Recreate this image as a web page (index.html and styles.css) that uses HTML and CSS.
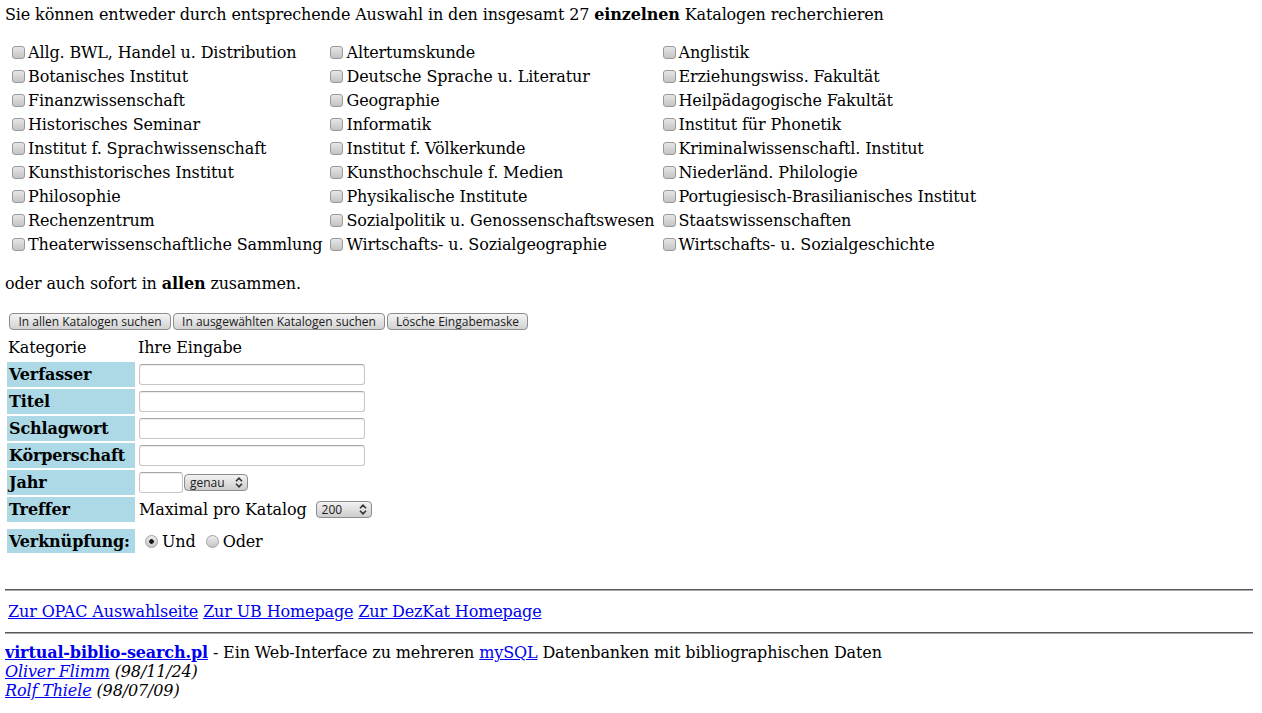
FILE: index.html
```html
<!DOCTYPE html>
<html lang="de">
<head>
<meta charset="utf-8">
<title>Virtueller Katalog</title>
<link rel="stylesheet" href="styles.css">
</head>
<body>
<p class="intro">Sie können entweder durch entsprechende Auswahl in den insgesamt 27 <b>einzelnen</b> Katalogen recherchieren</p>

<div class="catalogs">
  <label class="cat"><input type="checkbox" class="cb">Allg. BWL, Handel u. Distribution</label>
  <label class="cat"><input type="checkbox" class="cb">Altertumskunde</label>
  <label class="cat"><input type="checkbox" class="cb">Anglistik</label>
  <label class="cat"><input type="checkbox" class="cb">Botanisches Institut</label>
  <label class="cat"><input type="checkbox" class="cb">Deutsche Sprache u. Literatur</label>
  <label class="cat"><input type="checkbox" class="cb">Erziehungswiss. Fakultät</label>
  <label class="cat"><input type="checkbox" class="cb">Finanzwissenschaft</label>
  <label class="cat"><input type="checkbox" class="cb">Geographie</label>
  <label class="cat"><input type="checkbox" class="cb">Heilpädagogische Fakultät</label>
  <label class="cat"><input type="checkbox" class="cb">Historisches Seminar</label>
  <label class="cat"><input type="checkbox" class="cb">Informatik</label>
  <label class="cat"><input type="checkbox" class="cb">Institut für Phonetik</label>
  <label class="cat"><input type="checkbox" class="cb">Institut f. Sprachwissenschaft</label>
  <label class="cat"><input type="checkbox" class="cb">Institut f. Völkerkunde</label>
  <label class="cat"><input type="checkbox" class="cb">Kriminalwissenschaftl. Institut</label>
  <label class="cat"><input type="checkbox" class="cb">Kunsthistorisches Institut</label>
  <label class="cat"><input type="checkbox" class="cb">Kunsthochschule f. Medien</label>
  <label class="cat"><input type="checkbox" class="cb">Niederländ. Philologie</label>
  <label class="cat"><input type="checkbox" class="cb">Philosophie</label>
  <label class="cat"><input type="checkbox" class="cb">Physikalische Institute</label>
  <label class="cat"><input type="checkbox" class="cb">Portugiesisch-Brasilianisches Institut</label>
  <label class="cat"><input type="checkbox" class="cb">Rechenzentrum</label>
  <label class="cat"><input type="checkbox" class="cb">Sozialpolitik u. Genossenschaftswesen</label>
  <label class="cat"><input type="checkbox" class="cb">Staatswissenschaften</label>
  <label class="cat"><input type="checkbox" class="cb">Theaterwissenschaftliche Sammlung</label>
  <label class="cat"><input type="checkbox" class="cb">Wirtschafts- u. Sozialgeographie</label>
  <label class="cat"><input type="checkbox" class="cb">Wirtschafts- u. Sozialgeschichte</label>
</div>

<p class="all">oder auch sofort in <b>allen</b> zusammen.</p>

<form class="search">
  <div class="buttons">
    <button type="button" class="btn b1">In allen Katalogen suchen</button>
    <button type="button" class="btn b2">In ausgewählten Katalogen suchen</button>
    <button type="button" class="btn b3">Lösche Eingabemaske</button>
  </div>
  <table class="mask">
    <tr class="head">
      <td class="hcell">Kategorie</td>
      <td class="hcell">Ihre Eingabe</td>
    </tr>
    <tr class="row">
      <td class="label">Verfasser</td>
      <td class="field"><input type="text" class="txt"></td>
    </tr>
    <tr class="row">
      <td class="label">Titel</td>
      <td class="field"><input type="text" class="txt"></td>
    </tr>
    <tr class="row">
      <td class="label">Schlagwort</td>
      <td class="field"><input type="text" class="txt"></td>
    </tr>
    <tr class="row">
      <td class="label">Körperschaft</td>
      <td class="field"><input type="text" class="txt"></td>
    </tr>
    <tr class="row">
      <td class="label">Jahr</td>
      <td class="field">
        <div class="inline">
          <input type="text" class="txt year">
          <span class="sel sel-genau">
            <select class="dropdown"><option>genau</option><option>ab</option><option>bis</option></select>
            <svg class="chev" width="8" height="11" viewBox="0 0 8 11"><path d="M1 4.2 L4 1.2 L7 4.2 M1 6.8 L4 9.8 L7 6.8" fill="none" stroke="#333" stroke-width="1.6"/></svg>
          </span>
        </div>
      </td>
    </tr>
    <tr class="row">
      <td class="label">Treffer</td>
      <td class="field">
        <div class="inline">
          <span class="maxtext">Maximal pro Katalog</span>
          <span class="sel sel-200">
            <select class="dropdown"><option>200</option><option>50</option><option>100</option><option>500</option></select>
            <svg class="chev" width="8" height="11" viewBox="0 0 8 11"><path d="M1 4.2 L4 1.2 L7 4.2 M1 6.8 L4 9.8 L7 6.8" fill="none" stroke="#333" stroke-width="1.6"/></svg>
          </span>
        </div>
      </td>
    </tr>
    <tr class="spacer"><td></td><td></td></tr>
    <tr class="row link-row">
      <td class="label">Verknüpfung:</td>
      <td class="field">
        <div class="inline">
          <label class="opt opt-und"><input type="radio" name="bool" class="rb" checked>Und</label>
          <label class="opt opt-oder"><input type="radio" name="bool" class="rb">Oder</label>
        </div>
      </td>
    </tr>
  </table>
</form>

<hr class="rule rule-top">
<div class="nav">
  <a href="#">Zur OPAC Auswahlseite</a> <a href="#">Zur UB Homepage</a> <a href="#">Zur DezKat Homepage</a>
</div>
<hr class="rule rule-bottom">
<div class="footer">
  <div><a href="#" class="strong">virtual-biblio-search.pl</a> - Ein Web-Interface zu mehreren <a href="#">mySQL</a> Datenbanken mit bibliographischen Daten</div>
  <div class="sig"><a href="#">Oliver Flimm</a> (98/11/24)</div>
  <div class="sig"><a href="#">Rolf Thiele</a> (98/07/09)</div>
</div>
</body>
</html>
```

FILE: styles.css
```css
html, body {
  background: #ffffff;
}

body {
  margin: 5px 9px 5px 5px;
  font-family: "DejaVu Serif", serif;
  font-size: 16px;
  letter-spacing: -0.13px;
  color: #000000;
}

a {
  color: #0000ee;
  text-decoration: underline;
}

.intro {
  margin: 0;
  line-height: 19px;
}

/* catalog checkbox grid */
.catalogs {
  display: grid;
  grid-template-columns: repeat(3, max-content);
  grid-auto-rows: 24px;
  column-gap: 4px;
  margin: 16px 0 0 0;
  padding-left: 3px;
}

.cat {
  display: flex;
  align-items: center;
  white-space: nowrap;
  line-height: 19px;
}

.cb {
  -webkit-appearance: none;
  appearance: none;
  box-sizing: border-box;
  width: 13px;
  height: 13px;
  margin: 1px 3px 0 4px;
  border: 1px solid #9a9a9a;
  border-radius: 3px;
  background: linear-gradient(#e6e6e6, #c4c4c4);
  flex: none;
}

.all {
  margin: 18px 0 0 0;
  line-height: 19px;
}

/* buttons */
.search {
  margin: 0;
}

.buttons {
  display: flex;
  gap: 2px;
  margin: 20px 0 0 4px;
  height: 17px;
}

.btn {
  -webkit-appearance: none;
  appearance: none;
  box-sizing: border-box;
  height: 17px;
  padding: 0;
  margin: 0;
  border: 1px solid #8c8c8c;
  border-radius: 4px;
  background: linear-gradient(#f4f4f4, #d2d2d2);
  font-family: "Open Sans", "DejaVu Sans", sans-serif;
  font-size: 12px;
  letter-spacing: 0;
  line-height: 15px;
  color: #1a1a1a;
  text-align: center;
}

.b1 { width: 162px; }
.b2 { width: 212px; }
.b3 { width: 141px; }

/* search mask table */
.mask {
  border-collapse: separate;
  border-spacing: 2px;
  margin: 0;
}

.mask td {
  padding: 0 1px;
}

.head .hcell {
  height: 25px;
  vertical-align: bottom;
  padding-bottom: 3px;
  line-height: 19px;
}

.row td {
  height: 25px;
  vertical-align: middle;
}

.label {
  box-sizing: border-box;
  width: 128px;
  background: #add8e6;
  font-weight: bold;
  white-space: nowrap;
  padding-left: 2px !important;
}

.spacer td {
  height: 3px;
  padding: 0;
}

.link-row td {
  height: 24px;
}

.inline {
  display: flex;
  align-items: center;
}

.txt {
  box-sizing: border-box;
  width: 226px;
  height: 21px;
  margin: 0 0 0 1px;
  padding: 0 3px;
  border: 1px solid #c6c6c6;
  border-top-color: #a8a8a8;
  border-radius: 3px;
  background: #ffffff;
  box-shadow: inset 0 1px 1px rgba(0, 0, 0, 0.08);
  display: block;
}

.year {
  width: 44px;
}

.sel {
  position: relative;
  display: inline-block;
  flex: none;
}

.sel-genau {
  margin-left: 1px;
}

.sel-200 {
  margin-left: 9px;
}

.dropdown {
  -webkit-appearance: none;
  appearance: none;
  box-sizing: border-box;
  height: 17px;
  margin: 0;
  padding: 0 0 0 5px;
  border: 1px solid #8c8c8c;
  border-radius: 4px;
  background: linear-gradient(#f2f2f2, #cdcdcd);
  font-family: "Open Sans", "DejaVu Sans", sans-serif;
  font-size: 12px;
  letter-spacing: 0;
  line-height: 15px;
  color: #1a1a1a;
  display: block;
}

.sel-genau .dropdown { width: 64px; }
.sel-200 .dropdown { width: 56px; }

.chev {
  position: absolute;
  right: 5px;
  top: 3px;
  pointer-events: none;
}

.maxtext {
  line-height: 19px;
  white-space: nowrap;
  padding-left: 1px;
}

.opt {
  display: inline-flex;
  align-items: center;
  line-height: 19px;
}

.rb {
  -webkit-appearance: none;
  appearance: none;
  box-sizing: border-box;
  width: 13px;
  height: 13px;
  margin: 0 4px 0 0;
  border: 1px solid #a2a2a2;
  border-radius: 50%;
  background: linear-gradient(#ececec, #c6c6c6);
  flex: none;
}

.rb:checked {
  background: radial-gradient(circle, #1a1a1a 0 2px, rgba(0, 0, 0, 0) 2.6px), linear-gradient(#ececec, #c6c6c6);
}

.opt-und {
  margin-left: 7px;
}

.opt-oder {
  margin-left: 10px;
}

/* rules, nav and footer */
.rule {
  height: 0;
  margin: 8px 0;
  border: 0;
  border-top: 1px solid #585858;
  border-bottom: 1px solid #a8a8a8;
}

.rule-top {
  margin-top: 34px;
}

.rule-bottom {
  margin-bottom: 9px;
}

.nav {
  padding: 3px 3px;
  line-height: 19px;
  white-space: nowrap;
}

.footer {
  line-height: 19px;
}

.strong {
  font-weight: bold;
}

.sig {
  font-style: italic;
}
```
